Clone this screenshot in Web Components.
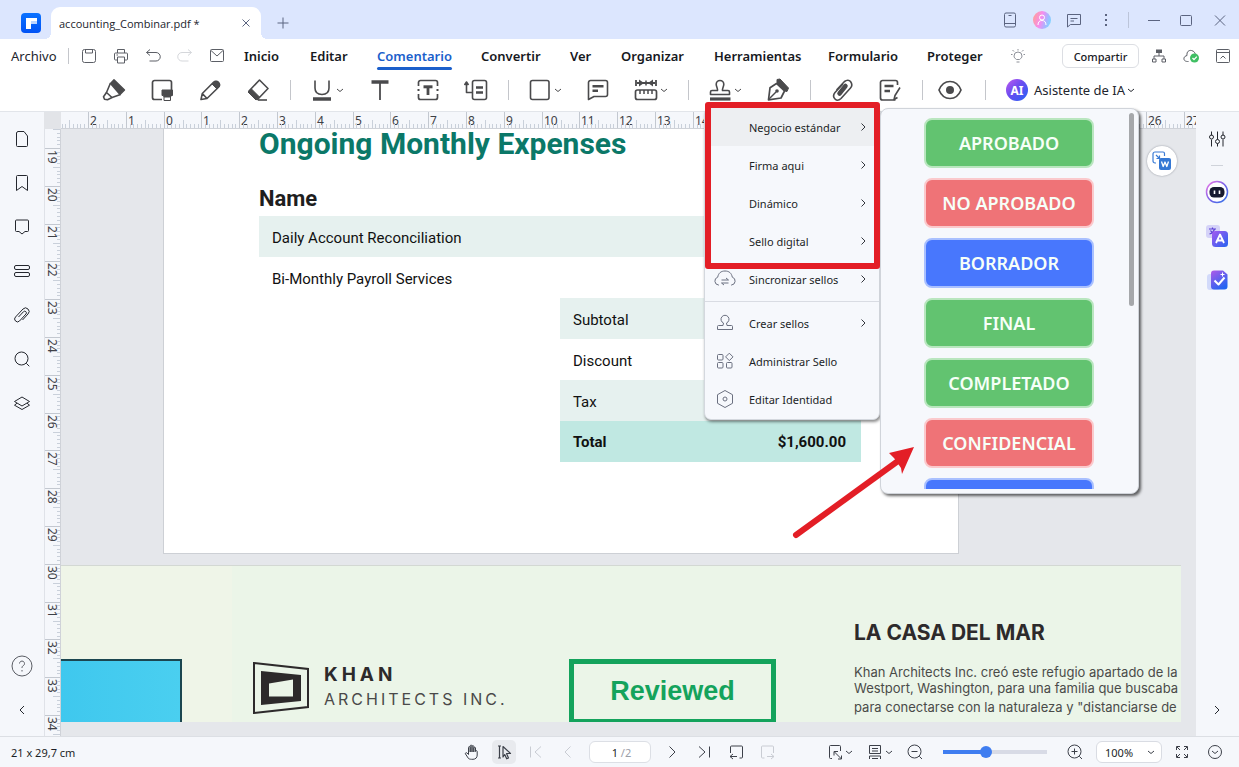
<!DOCTYPE html>
<html lang="es">
<head>
<meta charset="utf-8">
<title>accounting_Combinar.pdf</title>
<style>
  html, body { margin: 0; height: 100%; }
  body { font-family: "Noto Sans", "Open Sans", sans-serif; font-size: 11px; color: #1c1f26; background: #fff; overflow: hidden; }
</style>
</head>
<body>
<pdf-app></pdf-app>

<script>
const RESET = `
  *, *::before, *::after { box-sizing: border-box; }
  button { font: inherit; color: inherit; background: none; border: 0; padding: 0; margin: 0; display: flex; align-items: center; justify-content: center; }
  svg { display: block; flex: none; }
`;

function define(name, css, html, setup) {
  const tpl = document.createElement('template');
  tpl.innerHTML = `<style>${RESET}${css}</style>${html}`;
  customElements.define(name, class extends HTMLElement {
    constructor() {
      super();
      this.attachShadow({ mode: 'open' }).append(tpl.content.cloneNode(true));
    }
    connectedCallback() { if (setup) setup(this, this.shadowRoot); }
  });
}

/* 24 x 24 icon set, centred on 12,12 */
const ICONS = {
  logo: '<defs><linearGradient id="g" x1="0" y1="0" x2="0" y2="1"><stop offset="0" stop-color="#0a72ff"/><stop offset="1" stop-color="#0052f5"/></linearGradient></defs><rect x="2" y="2" width="20" height="20" rx="4" fill="url(#g)" stroke="none"/><path d="M7 7h11v6h-6v5H7z" fill="#fff" stroke="none"/><path d="M12 10h6v3h-6z" fill="#bcd5ff" stroke="none"/>',
  close: '<path d="M8.500 8.500l7 7M15.500 8.500l-7 7"/>',
  plus: '<path d="M12 6.500v11M6.500 12h11"/>',
  device: '<rect x="6.500" y="5" width="11" height="14" rx="1.500"/><path d="M6.500 15.500h11M10.500 7.500h3"/>',
  avatar: '<defs><linearGradient id="g" x1="0" y1="0.300" x2="1" y2="0.600"><stop offset="0" stop-color="#ff9f9a"/><stop offset=".45" stop-color="#f58cf0"/><stop offset=".75" stop-color="#a9b4ff"/><stop offset="1" stop-color="#7fd6ff"/></linearGradient></defs><circle cx="12" cy="12" r="9" fill="url(#g)" stroke="none"/><circle cx="12" cy="9.500" r="2.500" stroke="#fff"/><path d="M8 17c0-3 1.500-4.500 4-4.500s4 1.500 4 4.500" stroke="#fff"/>',
  chat: '<path d="M5.500 6.500h13v10h-10l-3 2.500z"/><path d="M8.500 10.500h7M8.500 13h3.500"/>',
  dots: '<g fill="currentColor" stroke="none"><rect x="11" y="6" width="2" height="2"/><rect x="11" y="11" width="2" height="2"/><rect x="11" y="16" width="2" height="2"/></g>',
  minimize: '<path d="M6 12.500h12"/>',
  maximize: '<rect x="6.500" y="7.500" width="11" height="10" rx="1"/>',
  winclose: '<path d="M7 7.500l10 10M17 7.500l-10 10"/>',
  save: '<rect x="5.500" y="5.500" width="13" height="13" rx="2"/><path d="M8.500 5.500v3.500h7V5.500"/>',
  print: '<path d="M8.500 9V5.500h7V9"/><rect x="5.500" y="9" width="13" height="7" rx="1"/><rect x="8.500" y="13" width="7" height="6" fill="#fff"/><path d="M7.500 11h1.500"/>',
  undo: '<path d="M9 5.500L5.500 8.500L9 11.500M5.500 8.500h9.500a4 4 0 0 1 0 8.500H8.500"/>',
  redo: '<path d="M15 5.500l3.500 3L15 11.500M18.500 8.500H9a4 4 0 0 0 0 8.500h6.500"/>',
  mail: '<rect x="5.500" y="5.500" width="13" height="12" rx="1"/><path d="M6 6.500l6 5.500l6-5.500"/>',
  bulb: '<path d="M10.500 15.500c-1.500-1-2.500-2-2.500-3.500a4 4 0 0 1 8 0c0 1.500-1 2.500-2.500 3.500zM10.500 18h3M12 5v1.500M5 10.500h1.500M17.500 10.500H19M6.500 6l1.500 1.500M17.500 6L16 7.500"/>',
  tree: '<rect x="9" y="5.500" width="6" height="3.500" fill="currentColor" stroke="none"/><path d="M12 9v3M7 15v-3h10v3"/><rect x="5.500" y="15" width="3.500" height="3"/><rect x="15" y="15" width="3.500" height="3"/>',
  cloudok: '<path d="M9.500 17.500c-3 .2-5-1-4.500-3.500c.3-1.500 1.500-2 3-2.500c-.5-4 2-5.500 4.500-5s4 2.500 4 5"/><circle cx="15.500" cy="14" r="4.500" fill="#3fbf63" stroke="none"/><path d="M13.500 14l1.500 1.600l2.800-3" stroke="#fff" stroke-width="1.300"/>',
  collapse: '<rect x="5.500" y="5.500" width="13" height="13" rx="1"/><path d="M5.500 8.500h13M9.500 14.500l2.500-2.500l2.500 2.500"/>',
  chev: '<path d="M9 11L12 13.500L15 11"/>',
  right: '<path d="M10.500 8.500L14 12l-3.500 3.500"/>',
  left: '<path d="M14 8L10 12l4 4"/>',
  more: '<path d="M10 8L14 12l-4 4"/>',
  highlighter: '<path d="M8.500 5L4.500 14.500L10 19.500L18.500 16.500" stroke-width="1.600"/><path d="M12 1.800L8.500 5.500L18 16.500L22.500 12z" fill="currentColor" stroke-width="1.400"/><path d="M4.500 14.500L1.500 18.700L2.500 21.300L5.500 21.700L10 19.500" stroke-width="1.600"/>',
  areahl: '<path d="M12 21.500H4.500a2 2 0 0 1-2-2V4.500a2 2 0 0 1 2-2h15a2 2 0 0 1 2 2V12" stroke-width="1.700"/><path d="M12 12h10.500v5.500h-1.500v1h-7.500v-1H12z" fill="currentColor"/><path d="M14 19h6.500v3.500H14z"/>',
  pencil: '<path d="M3 21.500l1.300-6L15.500 4.300a3.500 3.500 0 0 1 5 5L9 20.500zM4.300 15.500l4.700 5" stroke-width="1.600"/><path d="M14 6l5 5l2.500-3c1-2-2-5.500-4.500-4.500z" fill="currentColor"/>',
  eraser: '<path d="M13.500 2l8.500 8.500l-10.500 11L3 13z" stroke-width="1.600"/><path d="M5.500 11L2 14l8 8l3.500-3z" fill="currentColor"/><path d="M12 22h9" stroke-width="1.600"/>',
  underline: '<path d="M5 2.500V10c0 4.500 2.500 6.500 7 6.500s7-2 7-6.500V2.500" stroke-width="1.600"/><path d="M3 21h18" stroke-width="3.500"/>',
  text: '<path d="M3.500 4h17" stroke-width="3.500"/><path d="M12 4v18" stroke-width="1.800"/>',
  textbox: '<path d="M2.500 8V4.500a2 2 0 0 1 2-2h15a2 2 0 0 1 2 2V8M2.500 16v3.500a2 2 0 0 0 2 2h15a2 2 0 0 0 2-2V16" stroke-width="1.700"/><path d="M7.500 8.800h9" stroke-width="3"/><path d="M12 9v8" stroke-width="2.800"/><path d="M2.500 11v2M21.500 11v2" stroke-width="2"/>',
  callout: '<rect x="8.500" y="2.500" width="14" height="19" rx="2" stroke-width="1.600"/><path d="M12 9.500h7M12 14.500h7" stroke-width="2.400"/><path d="M2.500 5v9.500H8M.5 7l2-3l2 3" stroke-width="1.600"/>',
  square: '<rect x="2.500" y="2.500" width="18.500" height="19" rx="2" stroke-width="1.600"/>',
  note: '<path d="M2.500 21.500V4.500a2 2 0 0 1 2-2h15a2 2 0 0 1 2 2v12a2 2 0 0 1-2 2H8z" stroke-width="1.600"/><path d="M6.500 8.300h11M6.500 12.800h5.500" stroke-width="2.600"/>',
  measure: '<rect x="1.500" y="12" width="21" height="9.500" rx="2" stroke-width="1.700"/><path d="M6 12v4M10 12v4M14 12v4M18 12v4" stroke-width="1.500"/><path d="M2 2v6M22 2v6M3 5h18" stroke-width="1.800"/><path d="M5 1.500v7l5-3.500zM19 1.500v7l-5-3.500z" fill="currentColor" stroke="none"/><path d="M12 2.500v5" stroke-width="1.500"/>',
  stamp: '<path d="M2.500 16.500v-2.500a1.500 1.500 0 0 1 1.500-1.500h5.500c.5-2-1.300-3.500-1.300-6.200a3.800 3.800 0 0 1 7.600 0c0 2.700-1.800 4.200-1.300 6.200H20a1.500 1.500 0 0 1 1.500 1.500v2.500z" stroke-width="1.600"/><path d="M2 21h20.500" stroke-width="3.200"/>',
  pen: '<path d="M10.500 5.500L18.500 13l-3.500 7l-12.500 1.800l1.500-12z" stroke-width="1.700"/><path d="M3 21l7-7" stroke-width="1.500"/><circle cx="11" cy="13" r="1.800" fill="currentColor" stroke="none"/><path d="M11 1.500l3-.5l8.500 9l-1.500 3.500l-2-.5l-8-8z" fill="currentColor"/>',
  clip: '<path d="M13 6L5 14.500c-2 2.500-1.500 5 0 6.500s4 1.500 6-.5l9.500-10.500c1.800-2 1.500-4.500 0-6.500s-4-1.500-6 0L6.500 12" stroke-width="1.600"/><path d="M15.500 8l-6 7.500" stroke-width="4.500" stroke-linecap="round"/>',
  sign: '<path d="M19.500 7V4.500a2 2 0 0 0-2-2h-13a2 2 0 0 0-2 2V20a2 2 0 0 0 2 2h13" stroke-width="1.700"/><path d="M6.500 8h9M6.500 13h5.500" stroke-width="2.600"/><path d="M22 9.500l-5 8l-1 4l3.500-2" stroke-width="1.600"/>',
  eye: '<path d="M1 12c2-5 6-8.500 11-8.500S21 7 23 12c-2 5-6 8.500-11 8.500S3 17 1 12z" stroke-width="1.700"/><circle cx="12" cy="12" r="4" fill="currentColor" stroke="none"/>',
  page: '<path d="M6.500 6a2 2 0 0 1 1.500-1.500h6L17.500 9v9.500a1 1 0 0 1-1 1h-9a1 1 0 0 1-1-1z"/>',
  bookmark: '<path d="M6.500 5.500a1 1 0 0 1 1-1h9a1 1 0 0 1 1 1v14L12 15.500l-5.500 4z"/>',
  comment: '<path d="M5.500 6a1 1 0 0 1 1-1h11a1 1 0 0 1 1 1v9.500a1 1 0 0 1-1 1h-2.500l-3 2.500l-3-2.500H6.500a1 1 0 0 1-1-1z"/>',
  fields: '<rect x="4.500" y="6.500" width="15" height="4" rx="1.500"/><rect x="4.500" y="13.500" width="15" height="4" rx="1.500"/>',
  thinclip: '<path d="M12.500 17L18 11a3.500 3.500 0 0 0-5-5l-7.500 8a2.800 2.800 0 0 0 4 4l6.500-7a1.700 1.700 0 0 0-2.500-2.300L8.500 14"/>',
  search: '<circle cx="11.500" cy="11.500" r="6.500"/><path d="M16.300 16.300l3 3"/>',
  layers: '<path d="M12 6l7.500 4.500L12 15l-7.500-4.500z"/><path d="M7 12.200l-2.500 2L12 18.500l7.500-4.300l-2.500-2"/>',
  help: '<g stroke="#5a5d64"><circle cx="12" cy="12" r="10"/><path d="M9.500 9.500a2.500 2.500 0 1 1 3.800 2.200c-1 .6-1.300 1-1.300 2.300M12 16v1.500"/></g>',
  sliders: '<path d="M6.500 4.500v4M6.500 12.500v7M12.500 4.500v8M12.500 16.500v3M18 4.500v4M18 12.500v7"/><circle cx="6.500" cy="10" r="2"/><circle cx="12.500" cy="14.500" r="2"/><circle cx="18" cy="10" r="2"/>',
  robot: '<defs><linearGradient id="g" x1="0" y1="0" x2="1" y2="1"><stop offset="0" stop-color="#f178e8"/><stop offset=".5" stop-color="#7a62e8"/><stop offset="1" stop-color="#2c74e8"/></linearGradient></defs><circle cx="12" cy="12" r="10.500" fill="#fff" stroke="url(#g)" stroke-width="1.500"/><rect x="4.500" y="7" width="15" height="10.500" rx="4.500" fill="#171a30" stroke="none"/><path d="M9.500 10.500v3.500M14.500 10.500v3.500" stroke="#fff" stroke-width="1.600"/>',
  translate: '<defs><linearGradient id="g" x1="0" y1="0" x2="1" y2="1"><stop offset="0" stop-color="#a65af0"/><stop offset="1" stop-color="#2563f0"/></linearGradient></defs><rect x="1" y="1" width="14" height="13" rx="3" fill="#d5d3f8" stroke="none"/><path d="M4 5h7M7.500 3.500v1.500M9.500 5c-1 3-3 4.500-5 5M5.500 6.500c1 2 2.500 3 4 3.500" stroke="#5a3fd6" stroke-width="1.200"/><rect x="7" y="7" width="16" height="16" rx="3.500" fill="url(#g)" stroke="none"/><path d="M11 19l4-8.500l4 8.500M12.500 16.500h5" stroke="#fff" stroke-width="1.800"/>',
  check: '<defs><linearGradient id="g" x1="0" y1="0" x2=".6" y2="1"><stop offset="0" stop-color="#b05ae8"/><stop offset="1" stop-color="#2464f2"/></linearGradient></defs><rect x="2" y="6" width="13" height="16" rx="3" fill="#d2dafa" stroke="none"/><path d="M9 2.500h9l4.500 4v12a3 3 0 0 1-3 3H9a3 3 0 0 1-3-3v-13a3 3 0 0 1 3-3z" fill="url(#g)" stroke="none"/><path d="M9.500 12.500l4 4l6-7" stroke="#fff" stroke-width="2"/><path d="M17.500 4.500v4M15.500 6.500h4" stroke="#fff" stroke-width="1"/>',
  cloudsync: '<path d="M6 18H5.500a4 4 0 0 1-.8-7.800C5.500 6 8 4 12 4s6.500 2 7.300 6.200A4 4 0 0 1 18.500 18H18"/><path d="M15.500 13H8.500M15.500 13l-2.500-2M8.500 16h7M8.500 16l2.500 2"/>',
  stampthin: '<path d="M4.500 18.500v-3a1 1 0 0 1 1-1h4.500l.5-2.500a4 4 0 1 1 3 0l.5 2.500h4.500a1 1 0 0 1 1 1v3z"/>',
  apps: '<rect x="4.500" y="5.500" width="5.500" height="5.500" rx="1"/><rect x="4.500" y="13.500" width="5.500" height="5.500" rx="1"/><rect x="13.500" y="13.500" width="5.500" height="5.500" rx="1"/><path d="M16.300 4.200l3.700 3.700l-3.700 3.700L12.600 7.900z"/>',
  hexagon: '<path d="M12 3.500l7.500 4.200v8.600L12 20.500l-7.500-4.200V7.700z"/><circle cx="12" cy="12" r="2"/>',
  hand: '<path d="M8.500 18.500L5.500 14c-.6-1 .8-1.800 1.500-1l1.500 1.500V7.500c0-1.200 1.500-1.200 1.700 0V12V6c0-1.200 1.800-1.200 1.800 0v6V6.500c0-1.200 1.800-1.200 1.800 0V12V8c.2-1 1.700-1 1.700 0v3.500c0-1 1.700-1.200 1.700 0V15c0 2.500-1.500 4.300-4.200 4.300c-2 0-3.500 0-4.500-.8z"/>',
  cursor: '<path d="M6 6h3M6 18h3M7.500 6v12M11 6.500l7.500 7h-4l2 4.500l-1.800.8l-2-4.300L11 17z" stroke-width="1.200"/>',
  first: '<path d="M6.500 6.500v11M17 6.500L11 12l6 5.500"/>',
  prev: '<path d="M14.500 6.500L9 12l5.500 5.500"/>',
  next: '<path d="M9.500 6.500L15 12l-5.500 5.500"/>',
  last: '<path d="M17.500 6.500v11M7 6.500L13 12l-6 5.500"/>',
  rotl: '<path d="M6.500 13V7a1 1 0 0 1 1-1h10a1 1 0 0 1 1 1v10a1 1 0 0 1-1 1h-2M13 16.500H6M9 14l-3 2.500L9 19"/>',
  rotr: '<path d="M17.500 13V7a1 1 0 0 0-1-1h-10a1 1 0 0 0-1 1v10a1 1 0 0 0 1 1h2M11 16.500h7M15 14l3 2.500l-3 2.500"/>',
  fit: '<path d="M9 18.500H7.500a1 1 0 0 1-1-1v-11a1 1 0 0 1 1-1h9a1 1 0 0 1 1 1V11M11.500 12l7 7M11 15.500V11.500H15M18.500 15.500V19H15"/>',
  scroll: '<path d="M6.500 13.500v-8h11v8zM9 8.500h6M9 11h6M6.500 19v-3h11v3M9 18.500h6"/>',
  zoomout: '<circle cx="11.500" cy="11.500" r="6.500"/><path d="M8.500 11.500h6M16.300 16.300l2.700 2.700"/>',
  zoomin: '<circle cx="11.500" cy="11.500" r="6.500"/><path d="M8.500 11.500h6M11.500 8.500v6M16.300 16.300l2.700 2.700"/>',
  full: '<path d="M6.500 10V6.500H10M14 6.500h3.500V10M17.500 14v3.500H14M10 17.500H6.500V14M7 7l3 3M17 7l-3 3M17 17l-3-3M7 17l3-3"/>',
  circledown: '<circle cx="12" cy="12" r="6.500"/><path d="M9 11l3 2.500L15 11"/>',
  toword: '<path d="M6 14H5a2 2 0 0 1-2-2V5a2 2 0 0 1 2-2h8a1.500 1.500 0 0 1 1.500 1.500V7" stroke="#3a7bd5" stroke-width="1.200"/><path d="M6 6l3.500 3.500M9.500 6.500v3h-3" stroke="#3a7bd5" stroke-width="1.200"/><rect x="9" y="9" width="12" height="12" rx="2" fill="#3578d4" stroke="none"/><path d="M11.500 12.500l1.700 5l1.800-4.500l1.800 4.500l1.700-5" stroke="#fff" stroke-width="1.300"/>'
};

define('ui-icon', ':host{display:block;flex:none;width:24px;height:24px}svg{width:24px;height:24px}', '<svg viewBox="0 0 24 24" fill="none" stroke="currentColor" stroke-width="1" stroke-linejoin="round" aria-hidden="true"></svg>',
  (el, root) => { root.querySelector('svg').innerHTML = ICONS[el.getAttribute('name')] || ''; });

/* ---------- title bar ---------- */
define('title-bar', `
  :host { display: flex; align-items: center; height: 39px; background: #dce6fe; padding: 7px 7px 0 19px; color: #5b6480; }
  .tab { position: relative; align-self: stretch; width: 210px; margin: 0 10px 0 8px; padding: 0 3px 0 8px; background: #fff; border-radius: 9px 9px 0 0; display: flex; align-items: center; justify-content: space-between; font-size: 12px; }
  .tab::before, .tab::after { content: ""; position: absolute; bottom: 0; width: 6px; height: 6px; }
  .tab::before { right: 100%; background: radial-gradient(circle at 0 0, transparent 6px, #fff 6px); }
  .tab::after { left: 100%; background: radial-gradient(circle at 100% 0, transparent 6px, #fff 6px); }
  .name { color: #22252d; font-family: "Open Sans", "Noto Sans", sans-serif; font-size: 11px; }
  .fill { flex: 1; }
  .group { display: flex; gap: 8px; margin-bottom: 6px; }
  .window { gap: 8px; }
  .window button:last-child { margin-left: 2px; }
  i { width: 1px; height: 16px; background: #bcc5da; margin: 0 13px 6px 10px; }
  button { width: 24px; height: 24px; }
`, `
  <ui-icon name="logo"></ui-icon>
  <div class="tab"><span class="name"><slot></slot></span><button aria-label="Cerrar pestaña"><ui-icon name="close"></ui-icon></button></div>
  <button aria-label="Nueva pestaña"><ui-icon name="plus"></ui-icon></button>
  <span class="fill"></span>
  <div class="group">
    <button aria-label="Dispositivo"><ui-icon name="device"></ui-icon></button>
    <button aria-label="Cuenta"><ui-icon name="avatar"></ui-icon></button>
    <button aria-label="Mensajes"><ui-icon name="chat"></ui-icon></button>
    <button aria-label="Más"><ui-icon name="dots"></ui-icon></button>
  </div>
  <i></i>
  <div class="group window">
    <button aria-label="Minimizar"><ui-icon name="minimize"></ui-icon></button>
    <button aria-label="Maximizar"><ui-icon name="maximize"></ui-icon></button>
    <button aria-label="Cerrar"><ui-icon name="winclose"></ui-icon></button>
  </div>
`);

/* ---------- menu bar ---------- */
define('menu-bar', `
  :host { display: flex; align-items: center; height: 34px; background: #fff; padding: 0 4px 0 11px; font-size: 13px; color: #5c5f66; }
  .file { color: #22252d; width: 48px; justify-content: flex-start; }
  i { width: 1px; height: 16px; background: #c4c6cb; margin: 0 8px 0 9px; }
  .quick { display: flex; gap: 8px; }
  .quick button { width: 24px; height: 24px; }
  nav { display: grid; grid-template-columns: 66px 67px 104px 89px 51px 93px 114px 99px 79px; margin-left: 15px; flex: 1; }
  nav button { justify-self: start; height: 34px; font-weight: 600; color: #17191e; position: relative; white-space: nowrap; }
  nav .on { color: #1b5fcb; }
  nav .on::after { content: ""; position: absolute; left: 0; right: 0; bottom: 3px; height: 3px; background: #1b5fcb; border-radius: 2px; }
  .bulb { color: #8d9098; margin-right: 32px; }
  .share { width: 77px; height: 24px; border: 1px solid #dcdee3; border-radius: 6px; font-size: 11px; font-weight: 500; color: #17191e; }
  .end { display: flex; gap: 8px; margin-left: 8px; }
`, `
  <button class="file">Archivo</button><i></i>
  <div class="quick">
    <button aria-label="Guardar"><ui-icon name="save"></ui-icon></button>
    <button aria-label="Imprimir"><ui-icon name="print"></ui-icon></button>
    <button aria-label="Deshacer"><ui-icon name="undo"></ui-icon></button>
    <button aria-label="Rehacer" style="color:#d5d7db"><ui-icon name="redo"></ui-icon></button>
    <button aria-label="Correo"><ui-icon name="mail"></ui-icon></button>
  </div>
  <nav>
    <button>Inicio</button><button>Editar</button><button class="on">Comentario</button><button>Convertir</button><button>Ver</button><button>Organizar</button><button>Herramientas</button><button>Formulario</button><button>Proteger</button>
  </nav>
  <button class="bulb" aria-label="Ideas"><ui-icon name="bulb"></ui-icon></button>
  <button class="share">Compartir</button>
  <div class="end">
    <button aria-label="Organigrama"><ui-icon name="tree"></ui-icon></button>
    <button aria-label="Nube"><ui-icon name="cloudok"></ui-icon></button>
    <button aria-label="Contraer"><ui-icon name="collapse"></ui-icon></button>
  </div>
`);

/* ---------- tool bar ---------- */
const tool = (icon, label, more) => `<button class="${more ? 'more' : ''}" aria-label="${label}"><ui-icon name="${icon}"></ui-icon>${more ? '<ui-icon class="c" name="chev"></ui-icon>' : ''}</button>`;
define('tool-bar', `
  :host { display: flex; align-items: center; height: 39px; background: #fff; border-bottom: 1px solid #e2e5ea; padding: 0 0 4px 90px; color: #4a4a4c; }
  button { width: 48px; height: 32px; }
  .more { width: 58px; justify-content: flex-start; padding-left: 12px; }
  .c { width: 12px; display: flex; justify-content: center; overflow: hidden; }
  i { width: 16px; height: 20px; background: linear-gradient(#c4c6cb, #c4c6cb) center / 1px 100% no-repeat; }
  .eye { width: 40px; }
  .wide { width: 30px; }
  .ai { width: auto; margin-left: 6px; font-size: 13px; color: #22252d; white-space: nowrap; }
  .badge { width: 22px; height: 22px; border-radius: 50%; margin-right: 6px; display: grid; place-items: center; color: #fff; font-size: 12px; font-weight: 700; background: linear-gradient(135deg, #c05af0, #6a4cf0 45%, #2363f5); }
`, tool('highlighter', 'Resaltar') + tool('areahl', 'Resaltar área') + tool('pencil', 'Lápiz') + tool('eraser', 'Borrador') + '<i></i>' +
   tool('underline', 'Subrayar', 1) + tool('text', 'Texto') + tool('textbox', 'Cuadro de texto') + tool('callout', 'Llamada') + '<i></i>' +
   tool('square', 'Formas', 1) + tool('note', 'Nota') + tool('measure', 'Medir', 1) + '<i></i>' +
   tool('stamp', 'Sello', 1) + tool('pen', 'Firma') + '<i></i>' + tool('clip', 'Adjuntar') + tool('sign', 'Comentarios') + '<i></i>' +
   '<button class="eye" aria-label="Ocultar"><ui-icon name="eye"></ui-icon></button><i class="wide"></i>' +
   '<button class="ai"><span class="badge">AI</span>Asistente de IA<ui-icon class="c" name="chev"></ui-icon></button>');

/* ---------- side rails ---------- */
define('side-rail', `
  :host { display: flex; flex-direction: column; align-items: center; width: 44px; flex: none; background: #f5f7fb; padding: 5px 0 4px; color: #24272e; }
  ::slotted(button) { width: 42px; height: 44px; display: flex; align-items: center; justify-content: center; background: none; border: 0; padding: 0; color: inherit; }
  ::slotted(hr) { width: 12px; height: 1px; border: 0; background: #cfd3da; margin: 4px 0; }
  .fill { flex: 1; }
`, '<slot></slot><span class="fill"></span><slot name="end"></slot>');

/* ---------- rulers: one centimetre is 37.8 px at 100 % zoom ---------- */
define('cm-ruler', `
  :host { display: block; overflow: hidden; background: #f5f7fb; position: relative; }
  svg { position: absolute; inset: 0; width: 100%; height: 100%; font-size: 12px; fill: #3d4046; }
`, '<svg></svg>', (el, root) => {
  const vertical = el.hasAttribute('vertical');
  const origin = +el.getAttribute('origin'), first = +el.getAttribute('first'), last = +el.getAttribute('last');
  /* labels in this range lie under the open menus */
  const [hideFrom, hideTo] = (el.getAttribute('covered') || '99 99').split(' ').map(Number);
  const depth = 16;
  let out = '';
  for (let mm = (first - 1) * 10; mm <= last * 10 + 9; mm++) {
    const p = Math.round(origin + (mm - first * 10) * 3.78);
    const len = mm % 10 === 0 ? depth : mm % 5 === 0 ? 8 : 4;
    const fill = mm % 10 === 0 ? '#c3c8d0' : '#c9d0da';
    out += vertical
      ? `<rect x="${depth - len}" y="${p}" width="${len}" height="1" fill="${fill}"/>`
      : `<rect x="${p}" y="${depth - len}" width="1" height="${len}" fill="${fill}"/>`;
    const cm = mm / 10;
    if (mm % 10 === 0 && cm >= first && !(cm >= hideFrom && cm <= hideTo)) {
      const n = Math.abs(cm);
      out += vertical
        ? `<text transform="translate(3 ${p + 2}) rotate(90)">${n}</text>`
        : `<text x="${p + 2}" y="13">${n}</text>`;
    }
  }
  root.querySelector('svg').innerHTML = out;
});

/* ---------- document ---------- */
define('expense-page', `
  :host { display: block; width: 796px; margin-left: 102px; padding: 0 97px 91px 95px; background: #fff; border: solid #cdd0d5; border-width: 0 1px 1px; font-family: Roboto, sans-serif; font-size: 15px; color: #111; flex: none; box-sizing: border-box; }
  h1 { margin: 0 0 21px; font-size: 30px; line-height: 30px; font-weight: 700; color: #0b7868; white-space: nowrap; }
  table { width: 100%; border-collapse: collapse; }
  th, td { height: 41px; padding: 2px 15px 0 13px; text-align: left; font-weight: 400; }
  thead th { height: 36px; padding: 0; font-size: 22px; font-weight: 700; color: #1e1e1e; }
  .tint { background: #e6f1ef; }
  .sum { width: 301px; margin-left: auto; }
  .sum td { text-align: right; }
  .total th, .total td { font-weight: 700; background: #c0e8e2; padding-top: 0; }
`, `
  <h1>Ongoing Monthly Expenses</h1>
  <table><thead><tr><th>Name</th></tr></thead><tbody>
    <tr class="tint"><td>Daily Account Reconciliation</td></tr>
    <tr><td>Bi-Monthly Payroll Services</td></tr></tbody></table>
  <table class="sum"><tbody>
    <tr class="tint"><th>Subtotal</th><td></td></tr>
    <tr><th>Discount</th><td></td></tr>
    <tr class="tint"><th>Tax</th><td></td></tr>
    <tr class="total"><th>Total</th><td>$1,600.00</td></tr></tbody></table>
`);

define('architect-page', `
  :host { display: flex; flex: 1; min-height: 0; overflow: hidden; margin: 11px 15px 0 0; border-top: 1px solid #d3d8d3; background: #ebf5e8; font-family: Inter, sans-serif; color: #2d2a2b; }
  .side { flex: none; width: 171px; background: #eff5e8; padding-top: 93px; }
  .photo { width: 121px; height: 70px; background: linear-gradient(90deg, #3fc8ee, #4acff0); border: solid #1b4650; border-width: 2px 2px 0 0; }
  .brand { flex: none; width: 337px; padding: 96px 0 0 21px; display: flex; gap: 15px; }
  .brand svg { width: 56px; height: 52px; flex: none; }
  .name b { display: block; font-size: 19px; line-height: 26px; font-weight: 700; letter-spacing: 4px; }
  .name span { display: block; font-size: 16px; line-height: 22px; letter-spacing: 3px; color: #4a4949; white-space: nowrap; }
  .reviewed { flex: none; width: 207px; height: 65px; margin-top: 93px; border: 5px solid #14a35c; color: #14a35c; font: 700 27px/54px "Liberation Sans", Arial, sans-serif; text-align: center; }
  .copy { flex: none; padding: 54px 0 0 78px; white-space: nowrap; }
  h2 { margin: 0 0 18px; font-size: 21px; line-height: 26px; font-weight: 700; }
  p { margin: 0; font-size: 13px; line-height: 16px; color: #4a4b49; }
  .last { padding-top: 3px; }
`, `
  <div class="side"><div class="photo"></div></div>
  <div class="brand">
    <svg viewBox="0 0 56 52" role="img" aria-label="Khan"><path d="M1 1L55 7V45L1 51z" fill="none" stroke="#2d2a2b" stroke-width="2"/><path d="M8 9L48 13V39L8 43z M16 21.500V34.500H40V17.500z" fill="#2d2a2b" fill-rule="evenodd"/></svg>
    <div class="name"><b>KHAN</b><span>ARCHITECTS INC.</span></div>
  </div>
  <div class="reviewed">Reviewed</div>
  <div class="copy"><h2>LA CASA DEL MAR</h2>
    <p>Khan Architects Inc. creó este refugio apartado de la</p>
    <p>Westport, Washington, para una familia que buscaba</p>
    <p class="last">para conectarse con la naturaleza y "distanciarse de</p></div>
`);

define('document-view', `
  :host { flex: 1; min-width: 0; display: grid; grid-template-columns: 17px minmax(0, 1fr); grid-template-rows: 17px minmax(0, 1fr); background: #e5e7eb; position: relative; }
  .corner { background: #e2e4e8; }
  .across { border-bottom: 1px solid #cfd2d8; }
  .down { border-right: 1px solid #cfd2d8; border-left: 1px solid #dfe2e8; }
  .canvas { display: flex; flex-direction: column; overflow: hidden; padding-bottom: 14px; }
  .convert { position: absolute; right: 19px; top: 34px; width: 30px; height: 30px; border-radius: 50%; background: #fff; box-shadow: 0 0 2px #8a8f99; }
`, `
  <span class="corner"></span>
  <cm-ruler class="across" origin="27" first="-2" last="27" covered="15 25"></cm-ruler>
  <cm-ruler class="down" vertical origin="19" first="19" last="34"></cm-ruler>
  <div class="canvas"><expense-page></expense-page><architect-page></architect-page></div>
  <button class="convert" aria-label="Convertir a Word"><ui-icon name="toword"></ui-icon></button>
`);

/* ---------- stamp menu ---------- */
const entry = (label, icon, sub, on) => `<button role="menuitem" class="${on ? 'on' : ''}">${icon ? `<ui-icon name="${icon}"></ui-icon>` : '<span class="gap"></span>'}<span class="t">${label}</span>${sub ? '<ui-icon class="go" name="right"></ui-icon>' : ''}</button>`;
define('stamp-menu', `
  :host { display: block; width: 176px; background: #f6f8fc; border: 1px solid #d4d8de; border-radius: 7px; padding: 0 0 1px; box-shadow: 1px 2px 3px rgba(0,0,0,.45); box-sizing: border-box; }
  button { width: 100%; height: 38px; padding: 0 4px 0 8px; color: #6b7080; }
  .gap { width: 24px; }
  .t { flex: 1; text-align: left; margin-left: 12px; color: #1c1f26; white-space: nowrap; }
  .go { color: #33363d; }
  .on { background: #edeff2; }
  hr { height: 1px; border: 0; margin: 3px 0 2px; background: #d9dce3; }
`, '<div role="menu">' + entry('Negocio estándar', '', 1, 1) + entry('Firma aqui', '', 1) + entry('Dinámico', '', 1) + entry('Sello digital', '', 1) + entry('Sincronizar sellos', 'cloudsync', 1) + '<hr>' +
   entry('Crear sellos', 'stampthin', 1) + entry('Administrar Sello', 'apps') + entry('Editar Identidad', 'hexagon') + '</div>');

define('stamp-tile', `
  :host { display: block; --fill: #62c370; --edge: #b9e6bf; }
  :host([tone="red"]) { --fill: #ef7377; --edge: #fbc9cc; }
  :host([tone="blue"]) { --fill: #4877fd; --edge: #a9c0ff; }
  button { width: 170px; height: 50px; background: var(--fill); border: 2px solid var(--edge); border-radius: 8px; color: #f6fff8; font-size: 18px; font-weight: 600; }
`, '<button><slot></slot></button>');

define('stamp-gallery', `
  :host { display: flex; width: 259px; height: 386px; background: #f6f8fc; border: 1px solid #d0d4da; border-radius: 8px; box-shadow: 2px 2px 3px rgba(0,0,0,.6); padding: 0 4px 4px 43px; box-sizing: border-box; }
  .list { flex: 1; overflow: hidden; padding-top: 9px; display: flex; flex-direction: column; gap: 10px; }
  .bar { width: 5px; height: 193px; margin-top: 4px; border-radius: 3px; background: #a6a8ab; }
  stamp-tile { flex: none; }
`, `<div class="list">
  <stamp-tile>APROBADO</stamp-tile><stamp-tile tone="red">NO APROBADO</stamp-tile><stamp-tile tone="blue">BORRADOR</stamp-tile>
  <stamp-tile>FINAL</stamp-tile><stamp-tile>COMPLETADO</stamp-tile><stamp-tile tone="red">CONFIDENCIAL</stamp-tile><stamp-tile tone="blue"></stamp-tile>
  </div><div class="bar"></div>`);

/* ---------- status bar ---------- */
const small = (icon, label, cls = '') => `<button class="${cls}" aria-label="${label}"><ui-icon name="${icon}"></ui-icon></button>`;
define('status-bar', `
  :host { display: flex; align-items: center; height: 31px; background: #f5f7fb; border-top: 1px solid #dcdfe4; padding: 0 12px 0 11px; color: #3c4049; box-sizing: border-box; }
  .size { flex: 1; color: #1c1f26; }
  .nav { display: flex; align-items: center; gap: 8px; margin-right: 43px; }
  .nav .off { color: #c9ccd3; }
  .nav .on { background: #e8eaee; border-radius: 5px; }
  .page { display: flex; align-items: center; justify-content: center; width: 62px; height: 22px; margin: 0 1px; background: #fff; border: 1px solid #dcdfe5; border-radius: 6px; color: #9a9ea8; }
  .page input { width: 12px; border: 0; padding: 0; margin: 0; background: none; font: inherit; color: #1c1f26; text-align: center; }
  .drop { display: flex; margin-right: 8px; }
  .drop ui-icon + ui-icon { width: 12px; margin-left: -4px; overflow: hidden; display: flex; justify-content: center; }
  .track { width: 104px; height: 18px; margin: 0 16px; appearance: none; background: none; }
  .track::-webkit-slider-runnable-track { height: 4px; background: linear-gradient(90deg, #3f7df0 40%, #d8dbe6 40%); }
  .track::-webkit-slider-thumb { appearance: none; width: 12px; height: 12px; margin-top: -4px; border-radius: 50%; background: #3f7df0; }
  .zoom { position: relative; width: 66px; height: 22px; margin: 0 8px 0 9px; display: flex; }
  select { appearance: none; width: 100%; height: 22px; padding: 0 0 0 8px; border: 1px solid #d9dce3; border-radius: 6px; background: #fff; font: inherit; color: #1c1f26; }
  .zoom ui-icon { position: absolute; right: -1px; top: -1px; }
  .end { margin-left: 9px; }
`, `<span class="size">21 x 29,7 cm</span>
  <div class="nav">${small('hand', 'Mano')}${small('cursor', 'Seleccionar', 'on')}${small('first', 'Primera página', 'off')}${small('prev', 'Anterior', 'off')}
  <label class="page"><input aria-label="Página" value="1">/2</label>
  ${small('next', 'Siguiente')}${small('last', 'Última página')}${small('rotl', 'Vista anterior')}${small('rotr', 'Vista siguiente', 'off')}</div>
  <button class="drop" aria-label="Ajustar"><ui-icon name="fit"></ui-icon><ui-icon name="chev"></ui-icon></button>
  <button class="drop" aria-label="Desplazamiento"><ui-icon name="scroll"></ui-icon><ui-icon name="chev"></ui-icon></button>
  ${small('zoomout', 'Alejar')}
  <input class="track" type="range" aria-label="Zoom" min="0" max="100" value="40">
  ${small('zoomin', 'Acercar')}
  <label class="zoom"><select aria-label="Nivel de zoom"><option>100%</option></select><ui-icon name="chev"></ui-icon></label>
  ${small('full', 'Pantalla completa')}${small('circledown', 'Ocultar barra', 'end')}`);

/* ---------- tutorial marks drawn over the window ---------- */
define('focus-frame', ':host{display:block;width:175px;height:167px;border:6px solid #e31e26;border-radius:3px;pointer-events:none;box-sizing:border-box}', '');
define('pointer-arrow', ':host{display:block;width:124px;height:96px;pointer-events:none}', `
  <svg width="124" height="96" viewBox="0 0 124 96"><path d="M4 91L106 17" stroke="#e31e26" stroke-width="6" stroke-linecap="round"/><path d="M122 3L97 9L102 14L109 24L110 30z" fill="#e31e26"/></svg>`);

/* ---------- application ---------- */
const railButton = (icon, label, slot = '') => `<button ${slot} aria-label="${label}"><ui-icon name="${icon}"></ui-icon></button>`;
define('pdf-app', `
  :host { display: flex; flex-direction: column; height: 100vh; position: relative; overflow: hidden; }
  title-bar, menu-bar, tool-bar, status-bar { flex: none; box-sizing: border-box; }
  main { flex: 1; min-height: 0; display: flex; }
  .tail { width: 43px; padding-right: 1px; }
  .menu { position: absolute; left: 704px; top: 107px; }
  .gallery { position: absolute; left: 880px; top: 108px; }
  .frame { position: absolute; left: 705px; top: 102px; }
  .arrow { position: absolute; left: 792px; top: 444px; }
`, `
  <title-bar>accounting_Combinar.pdf *</title-bar>
  <menu-bar></menu-bar>
  <tool-bar></tool-bar>
  <main>
    <side-rail>${railButton('page', 'Miniaturas')}${railButton('bookmark', 'Marcadores')}${railButton('comment', 'Comentarios')}${railButton('fields', 'Campos')}${railButton('thinclip', 'Adjuntos')}${railButton('search', 'Buscar')}${railButton('layers', 'Capas')}
      ${railButton('help', 'Ayuda', 'slot="end"')}${railButton('left', 'Contraer', 'slot="end"')}</side-rail>
    <document-view></document-view>
    <side-rail class="tail">${railButton('sliders', 'Propiedades')}<hr>${railButton('robot', 'Asistente')}${railButton('translate', 'Traducir')}${railButton('check', 'Revisar')}
      ${railButton('more', 'Contraer', 'slot="end"')}</side-rail>
  </main>
  <status-bar></status-bar>
  <stamp-menu class="menu"></stamp-menu>
  <stamp-gallery class="gallery"></stamp-gallery>
  <focus-frame class="frame"></focus-frame>
  <pointer-arrow class="arrow"></pointer-arrow>
`);
</script>
</body>
</html>
